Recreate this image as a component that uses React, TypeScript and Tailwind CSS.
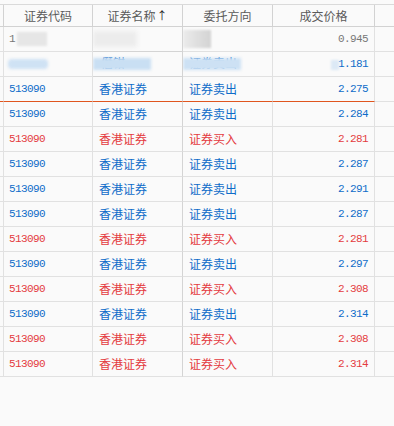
import React from "react";

type Row = { code: string; name: string; dir: string; price: string; color: "blue" | "red" };

const rows: Row[] = [
  { code: "513090", name: "香港证券", dir: "证券卖出", price: "2.275", color: "blue" },
  { code: "513090", name: "香港证券", dir: "证券卖出", price: "2.284", color: "blue" },
  { code: "513090", name: "香港证券", dir: "证券买入", price: "2.281", color: "red" },
  { code: "513090", name: "香港证券", dir: "证券卖出", price: "2.287", color: "blue" },
  { code: "513090", name: "香港证券", dir: "证券卖出", price: "2.291", color: "blue" },
  { code: "513090", name: "香港证券", dir: "证券卖出", price: "2.287", color: "blue" },
  { code: "513090", name: "香港证券", dir: "证券买入", price: "2.281", color: "red" },
  { code: "513090", name: "香港证券", dir: "证券卖出", price: "2.297", color: "blue" },
  { code: "513090", name: "香港证券", dir: "证券买入", price: "2.308", color: "red" },
  { code: "513090", name: "香港证券", dir: "证券卖出", price: "2.314", color: "blue" },
  { code: "513090", name: "香港证券", dir: "证券买入", price: "2.308", color: "red" },
  { code: "513090", name: "香港证券", dir: "证券买入", price: "2.314", color: "red" },
];

const cjk = { fontFamily: '"Noto Sans CJK SC", "Noto Sans", sans-serif' };
const mono = { fontFamily: '"Liberation Mono", "DejaVu Sans Mono", monospace' };

function Cells({ r, orange }: { r: Row; orange?: boolean }) {
  const c = r.color === "blue" ? "text-[#0f6cc9]" : "text-[#e43b40]";
  const b = orange ? "border-b-[#e0561f]" : "border-b-[#e1e1e1]";
  return (
    <>
      <div className={`h-[25px] border-b border-r border-r-[#e1e1e1] ${b}`} />
      <div className={`h-[25px] border-b border-r border-r-[#e1e1e1] ${b} flex items-center pl-[5px] text-[11px] tracking-[-0.6px] ${c}`} style={mono}>
        {r.code}
      </div>
      <div className={`h-[25px] border-b border-r border-r-[#d4d4d4] ${b} flex items-center pl-[6px] text-[12px] ${c}`} style={cjk}>
        {r.name}
      </div>
      <div className={`h-[25px] border-b border-r border-r-[#e1e1e1] ${b} flex items-center pl-[6px] text-[12px] ${c}`} style={cjk}>
        {r.dir}
      </div>
      <div className={`h-[25px] border-b border-r border-r-[#e1e1e1] ${b} flex items-center justify-end pr-[6px] text-[11px] tracking-[-0.6px] ${c}`} style={mono}>
        {r.price}
      </div>
      <div className={`h-[25px] border-b ${orange ? "border-b-[#e1e1e1]" : "border-b-[#e1e1e1]"}`} />
    </>
  );
}

export default function App() {
  const head = "h-[22px] border-b border-r border-[#d2d2d2] flex items-center justify-center text-[12px] text-[#5a5a5a]";
  return (
    <div className="w-[394px] h-[426px] bg-[#fafafa] overflow-hidden pt-[4px]">
      <div className="grid grid-cols-[4px_89px_90px_90px_102px_19px] border-t border-[#dadada]">
        <div className="h-[22px] border-b border-r border-[#d2d2d2]" />
        <div className={head} style={cjk}>证券代码</div>
        <div className={head} style={cjk}>
          证券名称<span className="text-[#222] text-[11px] ml-[1px]">↑</span>
        </div>
        <div className={head} style={cjk}>委托方向</div>
        <div className={head} style={cjk}>成交价格</div>
        <div className="h-[22px] border-b border-[#d2d2d2]" />

        {/* blurred row 1 */}
        <div className="h-[25px] border-b border-r border-[#e1e1e1]" />
        <div className="h-[25px] border-b border-r border-[#e1e1e1] flex items-center pl-[5px] text-[11px] text-[#777] overflow-hidden" style={mono}>
          1<span className="ml-[1px] w-[30px] h-[14px] bg-[#e6e6e6] blur-[1px]" />
        </div>
        <div className="h-[25px] border-b border-r border-[#d4d4d4] flex items-center overflow-hidden">
          <span className="w-[44px] h-[16px] bg-[#ececec] blur-[2px]" />
        </div>
        <div className="h-[25px] border-b border-r border-[#e1e1e1] flex items-center overflow-hidden">
          <span className="w-[28px] h-[18px] bg-[linear-gradient(90deg,#ebebeb,#d3d3d3)] blur-[1px]" />
        </div>
        <div className="h-[25px] border-b border-r border-[#e1e1e1] flex items-center justify-end pr-[6px] text-[11px] tracking-[-0.6px] text-[#777]" style={mono}>
          0.945
        </div>
        <div className="h-[25px] border-b border-[#e1e1e1]" />

        {/* blurred row 2 */}
        <div className="h-[25px] border-b border-r border-[#e1e1e1]" />
        <div className="h-[25px] border-b border-r border-[#e1e1e1] flex items-center pl-[4px] overflow-hidden">
          <span className="w-[40px] h-[10px] bg-[#cfe2f4] blur-[1.5px] rounded" />
        </div>
        <div className="h-[25px] border-b border-r border-[#d4d4d4] flex items-center overflow-hidden relative">
          <span className="absolute left-[8px] top-[2px] text-[12px] text-[#0f6cc9]" style={cjk}>僭钳</span>
          <span className="relative w-[58px] h-[12px] bg-[#c9dff3] blur-[1.5px]" />
        </div>
        <div className="h-[25px] border-b border-r border-[#e1e1e1] flex items-center overflow-hidden relative">
          <span className="absolute left-[6px] top-[2px] text-[12px] text-[#0f6cc9]" style={cjk}>证券卖出</span>
          <span className="relative w-[58px] h-[12px] bg-[#cde1f4] blur-[1.5px]" />
        </div>
        <div className="h-[25px] border-b border-r border-[#e1e1e1] flex items-center justify-end pr-[6px] text-[11px] tracking-[-0.6px] text-[#0f6cc9] relative" style={mono}>
          <span className="absolute left-[58px] top-[8px] w-[8px] h-[10px] bg-[#dce9f6] blur-[1px]" />
          1.181
        </div>
        <div className="h-[25px] border-b border-[#e1e1e1]" />

        {rows.map((r, i) => (
          <Cells key={i} r={r} orange={i === 0} />
        ))}
      </div>
    </div>
  );
}
